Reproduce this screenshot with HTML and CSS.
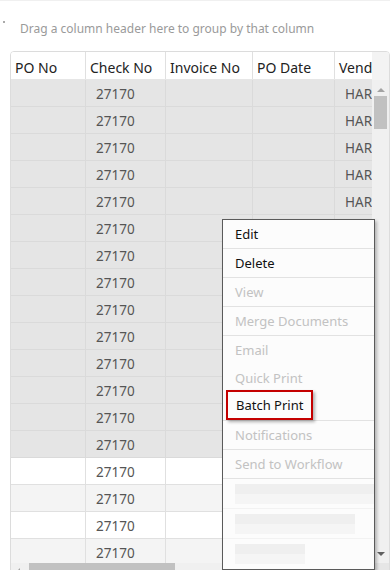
FILE: index.html
```html
<!DOCTYPE html>
<html lang="en">
<head>
    <meta charset="UTF-8">
    <meta name="viewport" content="width=device-width, initial-scale=1.0">
    <title>Checks</title>
    <link rel="stylesheet" href="styles.css">
</head>
<body>
    <div class="page">
        <div class="group-panel">
            <span class="group-dot"></span>
            <span class="group-hint">Drag a column header here to group by that column</span>
        </div>

        <div class="grid">
            <div class="grid-content">
                <div class="grid-row grid-header">
                    <div class="cell">PO No</div>
                    <div class="cell">Check No</div>
                    <div class="cell">Invoice No</div>
                    <div class="cell">PO Date</div>
                    <div class="cell">Vendor Name</div>
                </div>
                <div class="grid-body">
                    <div class="grid-row selected"><div class="cell"></div><div class="cell">27170</div><div class="cell"></div><div class="cell"></div><div class="cell">HARDWARE CO</div></div>
                    <div class="grid-row selected"><div class="cell"></div><div class="cell">27170</div><div class="cell"></div><div class="cell"></div><div class="cell">HARDWARE CO</div></div>
                    <div class="grid-row selected"><div class="cell"></div><div class="cell">27170</div><div class="cell"></div><div class="cell"></div><div class="cell">HARDWARE CO</div></div>
                    <div class="grid-row selected"><div class="cell"></div><div class="cell">27170</div><div class="cell"></div><div class="cell"></div><div class="cell">HARDWARE CO</div></div>
                    <div class="grid-row selected"><div class="cell"></div><div class="cell">27170</div><div class="cell"></div><div class="cell"></div><div class="cell">HARDWARE CO</div></div>
                    <div class="grid-row selected"><div class="cell"></div><div class="cell">27170</div><div class="cell"></div><div class="cell"></div><div class="cell">HARDWARE CO</div></div>
                    <div class="grid-row selected"><div class="cell"></div><div class="cell">27170</div><div class="cell"></div><div class="cell"></div><div class="cell">HARDWARE CO</div></div>
                    <div class="grid-row selected"><div class="cell"></div><div class="cell">27170</div><div class="cell"></div><div class="cell"></div><div class="cell">HARDWARE CO</div></div>
                    <div class="grid-row selected"><div class="cell"></div><div class="cell">27170</div><div class="cell"></div><div class="cell"></div><div class="cell">HARDWARE CO</div></div>
                    <div class="grid-row selected"><div class="cell"></div><div class="cell">27170</div><div class="cell"></div><div class="cell"></div><div class="cell">HARDWARE CO</div></div>
                    <div class="grid-row selected"><div class="cell"></div><div class="cell">27170</div><div class="cell"></div><div class="cell"></div><div class="cell">HARDWARE CO</div></div>
                    <div class="grid-row selected"><div class="cell"></div><div class="cell">27170</div><div class="cell"></div><div class="cell"></div><div class="cell">HARDWARE CO</div></div>
                    <div class="grid-row selected"><div class="cell"></div><div class="cell">27170</div><div class="cell"></div><div class="cell"></div><div class="cell">HARDWARE CO</div></div>
                    <div class="grid-row selected"><div class="cell"></div><div class="cell">27170</div><div class="cell"></div><div class="cell"></div><div class="cell">HARDWARE CO</div></div>
                    <div class="grid-row"><div class="cell"></div><div class="cell">27170</div><div class="cell"></div><div class="cell"></div><div class="cell">HARDWARE CO</div></div>
                    <div class="grid-row alt"><div class="cell"></div><div class="cell">27170</div><div class="cell"></div><div class="cell"></div><div class="cell">HARDWARE CO</div></div>
                    <div class="grid-row"><div class="cell"></div><div class="cell">27170</div><div class="cell"></div><div class="cell"></div><div class="cell">HARDWARE CO</div></div>
                    <div class="grid-row alt"><div class="cell"></div><div class="cell">27170</div><div class="cell"></div><div class="cell"></div><div class="cell">HARDWARE CO</div></div>
                </div>
            </div>

            <div class="vscroll">
                <div class="vscroll-gutter"></div>
                <div class="vscroll-track">
                    <span class="arrow arrow-up"></span>
                    <div class="vscroll-thumb"></div>
                    <span class="arrow arrow-down"></span>
                </div>
            </div>

            <div class="hscroll">
                <span class="arrow arrow-left"></span>
                <div class="hscroll-thumb"></div>
            </div>
            <div class="scroll-corner"></div>
        </div>

        <ul class="context-menu">
            <li class="menu-item">Edit</li>
            <li class="menu-item">Delete</li>
            <li class="menu-item disabled">View</li>
            <li class="menu-item disabled">Merge Documents</li>
            <li class="menu-item disabled no-line">Email</li>
            <li class="menu-item disabled no-line">Quick Print</li>
            <li class="menu-item"><span class="highlight">Batch Print</span></li>
            <li class="menu-item disabled">Notifications</li>
            <li class="menu-item disabled">Send to Workflow</li>
            <li class="menu-item masked"><span class="mask mask-long"></span></li>
            <li class="menu-item masked"><span class="mask mask-mid"></span></li>
            <li class="menu-item masked no-line"><span class="mask mask-short"></span></li>
        </ul>
    </div>
</body>
</html>
```

FILE: styles.css
```css
body {
    margin: 0;
    font-family: "Noto Sans", "Open Sans", sans-serif;
    background-color: #fff;
    color: #333;
}
.page {
    position: relative;
    height: 570px;
    overflow: hidden;
    border-top: 1px solid #f0f0f0;
}
.group-panel {
    display: flex;
    align-items: center;
    height: 50px;
    padding-left: 3px;
    box-sizing: border-box;
}
.group-dot {
    width: 2px;
    height: 2px;
    background-color: #aaa;
    margin-top: -8px;
    margin-right: 15px;
}
.group-hint {
    font-size: 12px;
    color: #9a9a9a;
    margin-top: 4px;
}
.grid {
    display: grid;
    grid-template-columns: 1fr 17px;
    grid-template-rows: 511px 17px;
    width: 380px;
    margin-left: 10px;
    border: 1px solid #dcdcdc;
    border-radius: 4px;
    box-sizing: border-box;
    overflow: hidden;
}
.grid-content {
    overflow: hidden;
}
.grid-row {
    display: grid;
    grid-template-columns: 75px 80px 87px 82px 120px;
    height: 27px;
    border-bottom: 1px solid #e0e0e0;
    box-sizing: border-box;
    background-color: #fff;
}
.cell {
    display: flex;
    align-items: center;
    padding: 2px 0 0 10px;
    border-right: 1px solid #e0e0e0;
    white-space: nowrap;
    overflow: hidden;
    font-size: 13.5px;
    color: #555;
}
.grid-header {
    height: 28px;
    border-bottom-color: #e6e6e6;
}
.grid-header .cell {
    padding: 3px 0 0 4px;
    font-size: 14px;
    color: #222;
}
.grid-row.selected {
    background-color: #e5e5e5;
    border-bottom-color: #dadada;
}
.grid-row.selected .cell {
    border-right-color: #dadada;
}
.grid-row.alt {
    background-color: #f4f4f4;
}
.vscroll {
    display: flex;
    flex-direction: column;
    background-color: #f0f0f0;
}
.vscroll-gutter {
    height: 28px;
    background-color: #f3f3f3;
}
.vscroll-track {
    flex: 1;
    display: flex;
    flex-direction: column;
    align-items: center;
    padding-top: 8px;
}
.vscroll-thumb {
    width: 13px;
    height: 33px;
    margin-top: 4px;
    background-color: #c1c1c1;
}
.arrow {
    width: 0;
    height: 0;
    border: 4px solid transparent;
}
.arrow-up {
    border-bottom-color: #a3a3a3;
    border-top-width: 0;
}
.arrow-down {
    margin-top: auto;
    margin-bottom: 7px;
    border-top-color: #606060;
    border-bottom-width: 0;
}
.hscroll {
    display: flex;
    align-items: flex-start;
    background-color: #f0f0f0;
}
.hscroll-thumb {
    width: 146px;
    height: 13px;
    margin-left: 9px;
    background-color: #c1c1c1;
}
.arrow-left {
    margin: 5px 0 0 5px;
    border-right-color: #a3a3a3;
    border-left-width: 0;
}
.scroll-corner {
    background-color: #e6e6e6;
}
.context-menu {
    position: absolute;
    left: 222px;
    top: 218px;
    width: 153px;
    margin: 0;
    padding: 0;
    list-style: none;
    background-color: #fcfcfc;
    border: 1px solid #5a5a5a;
    box-sizing: border-box;
    box-shadow: 2px 2px 3px rgba(0, 0, 0, 0.25);
}
.menu-item {
    display: flex;
    align-items: center;
    height: 29px;
    padding-left: 12px;
    border-bottom: 1px solid #e2e2e2;
    box-sizing: border-box;
    font-size: 13px;
    color: #111;
    white-space: nowrap;
}
.menu-item.disabled {
    color: #c2c2c2;
}
.menu-item.no-line {
    border-bottom: none;
    height: 28px;
}
.menu-item.masked {
    height: 30px;
    border-bottom-color: #f2f2f2;
}
.highlight {
    position: relative;
    top: -1px;
    margin-left: -9px;
    padding: 4px 8px;
    border: 2px solid #c40000;
    box-shadow: 2px 2px 3px rgba(0, 0, 0, 0.3);
}
.mask {
    display: block;
    height: 20px;
    background: linear-gradient(180deg, #efefef 0, #efefef 50%, #f5f5f5 50%, #f5f5f5 100%);
}
.mask-long {
    width: 140px;
}
.mask-mid {
    width: 120px;
}
.mask-short {
    width: 70px;
}
```
